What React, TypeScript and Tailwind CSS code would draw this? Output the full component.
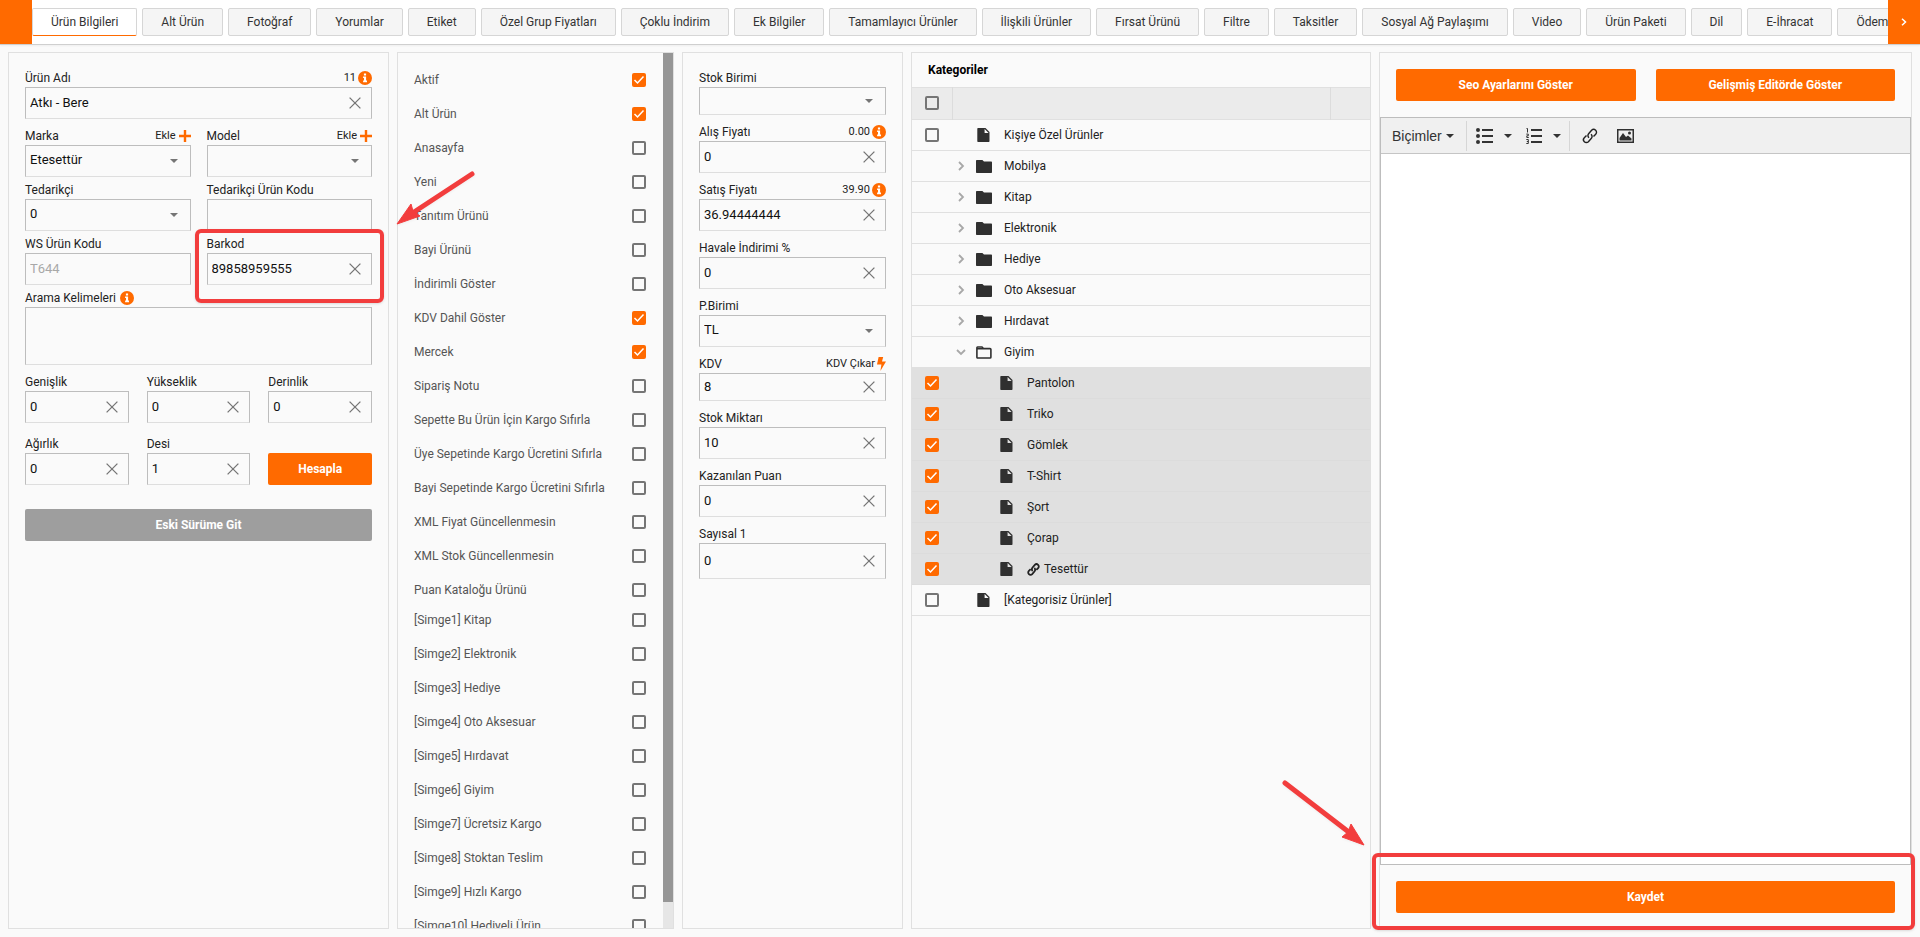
import { useState } from "react";
import type { ReactNode } from "react";
import clsx from "clsx";

const tabs = [
  "Ürün Bilgileri", "Alt Ürün", "Fotoğraf", "Yorumlar", "Etiket", "Özel Grup Fiyatları", "Çoklu İndirim",
  "Ek Bilgiler", "Tamamlayıcı Ürünler", "İlişkili Ürünler", "Fırsat Ürünü", "Filtre", "Taksitler",
  "Sosyal Ağ Paylaşımı", "Video", "Ürün Paketi", "Dil", "E-İhracat", "Ödeme Seçenekleri",
];

const flags = [
  { label: "Aktif", on: true },
  { label: "Alt Ürün", on: true },
  { label: "Anasayfa" },
  { label: "Yeni" },
  { label: "Tanıtım Ürünü" },
  { label: "Bayi Ürünü" },
  { label: "İndirimli Göster" },
  { label: "KDV Dahil Göster", on: true },
  { label: "Mercek", on: true },
  { label: "Sipariş Notu" },
  { label: "Sepette Bu Ürün İçin Kargo Sıfırla" },
  { label: "Üye Sepetinde Kargo Ücretini Sıfırla" },
  { label: "Bayi Sepetinde Kargo Ücretini Sıfırla" },
  { label: "XML Fiyat Güncellenmesin" },
  { label: "XML Stok Güncellenmesin" },
  { label: "Puan Kataloğu Ürünü" },
];

const symbols = [
  "[Simge1] Kitap", "[Simge2] Elektronik", "[Simge3] Hediye", "[Simge4] Oto Aksesuar", "[Simge5] Hırdavat",
  "[Simge6] Giyim", "[Simge7] Ücretsiz Kargo", "[Simge8] Stoktan Teslim", "[Simge9] Hızlı Kargo",
  "[Simge10] Hediyeli Ürün",
];

type Category = { name: string; kind: "file" | "folder" | "open" | "child"; linked?: boolean };

const categories: Category[] = [
  { name: "Kişiye Özel Ürünler", kind: "file" },
  { name: "Mobilya", kind: "folder" },
  { name: "Kitap", kind: "folder" },
  { name: "Elektronik", kind: "folder" },
  { name: "Hediye", kind: "folder" },
  { name: "Oto Aksesuar", kind: "folder" },
  { name: "Hırdavat", kind: "folder" },
  { name: "Giyim", kind: "open" },
  { name: "Pantolon", kind: "child" },
  { name: "Triko", kind: "child" },
  { name: "Gömlek", kind: "child" },
  { name: "T-Shirt", kind: "child" },
  { name: "Şort", kind: "child" },
  { name: "Çorap", kind: "child" },
  { name: "Tesettür", kind: "child", linked: true },
  { name: "[Kategorisiz Ürünler]", kind: "file" },
];

function InfoIcon() {
  return (
    <svg width="14" height="14" viewBox="0 0 14 14" aria-hidden="true">
      <circle cx="7" cy="7" r="7" fill="#ff6a00" />
      <path d="M5.900 2.600h2.200v2H5.900zM5.100 5.500h3v4.100h.900V11.200H5.100V9.600h.900V7.100h-.900z" fill="#fff" />
    </svg>
  );
}

function PlusIcon() {
  return (
    <svg width="12" height="12" viewBox="0 0 12 12" aria-hidden="true">
      <path d="M6 0v12M0 6h12" stroke="#ff6a00" strokeWidth="2.4" />
    </svg>
  );
}

function BoltIcon() {
  return (
    <svg width="9" height="14" viewBox="0 0 9 14" aria-hidden="true">
      <path d="M1.6 0h4.6L5 4.4h4L3.4 14l1-6.4H0z" fill="#ff6a00" />
    </svg>
  );
}

function ClearIcon() {
  return (
    <svg width="12" height="12" viewBox="0 0 12 12" aria-hidden="true">
      <path d="M.6.6l10.8 10.8M11.4.6L.6 11.4" stroke="#757575" strokeWidth="1.3" />
    </svg>
  );
}

function Caret({ className }: { className?: string }) {
  return (
    <svg width="8" height="4" viewBox="0 0 8 4" className={className} fill="currentColor" aria-hidden="true">
      <path d="M0 0h8L4 4z" />
    </svg>
  );
}

function FileIcon() {
  return (
    <svg width="13" height="14" viewBox="0 0 13 14" aria-hidden="true">
      <path d="M1 0h7.500L12.500 4v9.300c0 .400-.300.700-.700.700H1c-.400 0-.700-.300-.700-.700V.700C.300.300.600 0 1 0zM7.600 1v4h4z" fill="#303030" fillRule="evenodd" />
    </svg>
  );
}

function FolderIcon({ open }: { open?: boolean }) {
  return (
    <svg width="16" height="13" viewBox="0 0 16 13" aria-hidden="true">
      {open ? (
        <path d="M1.5 1h4.500l1.500 1.500h6.500c.500 0 .900.300.900.800v8c0 .400-.400.700-.900.700H1.700c-.500 0-.800-.300-.800-.700V1.700C.900 1.300 1.100 1 1.500 1zM1 2.800h14" fill="none" stroke="#303030" strokeWidth="1.6" />
      ) : (
        <path d="M1 0h5.400L8 1.500h7c.600 0 1 .400 1 1V12c0 .600-.400 1-1 1H1c-.600 0-1-.400-1-1V1c0-.600.400-1 1-1z" fill="#303030" />
      )}
    </svg>
  );
}

function Chevron({ down }: { down?: boolean }) {
  return (
    <svg width="10" height="10" viewBox="0 0 10 10" fill="none" stroke="#a8a8a8" strokeWidth="1.8" aria-hidden="true">
      <path d={down ? "M1 3l4 4 4-4" : "M3 1l4 4-4 4"} />
    </svg>
  );
}

function LinkIcon({ size, stroke }: { size: number; stroke: number }) {
  return (
    <svg width={size} height={size} viewBox="0 0 16 16" fill="none" stroke="#222" strokeWidth={stroke} aria-hidden="true">
      <path d="M7 9.8a2.8 2.8 0 0 1-.4-4L9.6 2.3a2.8 2.8 0 0 1 4.1 4L11.5 8.6" />
      <path d="M9 6.2a2.8 2.8 0 0 1 .4 4L6.4 13.7a2.8 2.8 0 0 1-4.1-4L4.5 7.4" />
    </svg>
  );
}

function Check({ label, id, defaultChecked }: { label?: string; id?: string; defaultChecked?: boolean }) {
  return (
    <span className="relative block size-[14px] shrink-0">
      <input
        id={id}
        type="checkbox"
        aria-label={label}
        defaultChecked={defaultChecked}
        className="peer block size-[14px] appearance-none rounded-xs border-2 border-[#757575] checked:border-[#ff6a00] checked:bg-[#ff6a00]"
      />
      <svg viewBox="0 0 14 14" className="pointer-events-none absolute inset-0 hidden size-[14px] peer-checked:block" fill="none" stroke="#fff" strokeWidth="1.5" aria-hidden="true">
        <path d="M2.5 7l3 3 6-6.500" />
      </svg>
    </span>
  );
}

type FieldProps = {
  id: string;
  label: string;
  value?: string;
  type?: "text" | "select" | "plain";
  extra?: ReactNode;
  height?: string;
  disabled?: boolean;
};

const boxStyle = "w-full border border-[#bdbdbd] border-b-[#dedede] bg-transparent px-1 pb-[2px] text-[13px] text-[#111] outline-none";

function Field({ id, label, value = "", type = "text", extra, height = "h-8", disabled }: FieldProps) {
  return (
    <div className="min-w-0">
      <div className="flex h-[18px] items-center justify-between">
        <label htmlFor={id}>{label}</label>
        {extra}
      </div>
      <div className="relative">
        {type === "select" ? (
          <>
            <select id={id} defaultValue={value} className={clsx(boxStyle, height, "block appearance-none")}>
              <option value={value}>{value}</option>
            </select>
            <Caret className="pointer-events-none absolute top-1/2 right-[13px] -translate-y-1/2 text-[#757575]" />
          </>
        ) : (
          <input id={id} type="text" defaultValue={value} disabled={disabled} className={clsx(boxStyle, height, "block disabled:text-[#a8a8a8]")} />
        )}
        {type === "text" && !disabled && (
          <button type="button" aria-label={`${label} temizle`} className="absolute inset-y-0 right-[11px] flex items-center">
            <ClearIcon />
          </button>
        )}
      </div>
    </div>
  );
}

function Hint({ children }: { children: ReactNode }) {
  return (
    <span className="flex items-center gap-[2px] text-[11px]">
      {children}
      <InfoIcon />
    </span>
  );
}

function AddButton() {
  return (
    <button type="button" className="flex items-center gap-[3px] text-[11px]">
      Ekle
      <PlusIcon />
    </button>
  );
}

function Button({ children, gray }: { children: ReactNode; gray?: boolean }) {
  return (
    <button type="button" className={clsx("h-8 w-full rounded-xs text-xs font-bold text-white", gray ? "bg-[#9e9e9e]" : "bg-[#ff6a00]")}>
      {children}
    </button>
  );
}

function TabBar() {
  const [active, setActive] = useState(0);
  return (
    <nav className="flex h-[45px] shrink-0 border-b border-[#cfcfcf] bg-white shadow-xs">
      <button type="button" aria-label="Geri" className="h-11 w-8 shrink-0 bg-[#ff6a00]" />
      <div className="flex min-w-0 flex-1 gap-[5px] overflow-hidden pt-2">
        {tabs.map((tab, i) => (
          <button
            key={tab}
            type="button"
            onClick={() => setActive(i)}
            className={clsx(
              "h-7 shrink-0 rounded-xs border border-[#d6d6d6] px-[18px] whitespace-nowrap text-[#333]",
              i === active ? "border-b-[#ff6a00] bg-white" : "bg-[#f5f5f5]"
            )}
          >
            {tab}
          </button>
        ))}
      </div>
      <button type="button" aria-label="İleri" className="flex h-11 w-8 shrink-0 items-center justify-center bg-[#ff6a00]">
        <svg width="6" height="8" viewBox="0 0 6 8" fill="none" stroke="#fff" strokeWidth="1.5" aria-hidden="true">
          <path d="M1 .7L4.5 4 1 7.3" />
        </svg>
      </button>
    </nav>
  );
}

function GeneralPanel() {
  return (
    <section className="border border-[#e0e0e0] p-4">
      <Field id="name" label="Ürün Adı" value="Atkı - Bere" extra={<Hint>11</Hint>} />
      <div className="mt-2 grid grid-cols-2 gap-x-4 gap-y-1">
        <Field id="brand" label="Marka" value="Etesettür" type="select" extra={<AddButton />} />
        <Field id="model" label="Model" type="select" extra={<AddButton />} />
        <Field id="supplier" label="Tedarikçi" value="0" type="select" />
        <Field id="supplierCode" label="Tedarikçi Ürün Kodu" type="plain" />
        <Field id="wsCode" label="WS Ürün Kodu" value="T644" disabled />
        <div className="relative">
          <Field id="barcode" label="Barkod" value="89858959555" />
          <div className="pointer-events-none absolute -inset-x-3 -top-[6px] -bottom-[18px] rounded-md border-4 border-[#f23d3d] shadow-sm" />
          <svg width="80" height="56" viewBox="0 0 80 56" className="pointer-events-none absolute -top-[65px] left-full ml-6 drop-shadow-xs" aria-hidden="true">
            <path d="M76 4L15 44" stroke="#f23d3d" strokeWidth="5" strokeLinecap="round" />
            <path d="M1 54L15 34l2 7 7 5z" fill="#f23d3d" stroke="#f23d3d" strokeWidth="1" />
          </svg>
        </div>
      </div>
      <div className="mt-1">
        <div className="flex h-[18px] items-center gap-1">
          <label htmlFor="keywords">Arama Kelimeleri</label>
          <InfoIcon />
        </div>
        <textarea id="keywords" className={clsx(boxStyle, "block h-[58px] resize-none")} />
      </div>
      <div className="mt-2 grid grid-cols-3 items-end gap-x-[18px] gap-y-3">
        <Field id="width" label="Genişlik" value="0" />
        <Field id="height" label="Yükseklik" value="0" />
        <Field id="depth" label="Derinlik" value="0" />
        <Field id="weight" label="Ağırlık" value="0" />
        <Field id="desi" label="Desi" value="1" />
        <Button>Hesapla</Button>
      </div>
      <div className="mt-6">
        <Button gray>Eski Sürüme Git</Button>
      </div>
    </section>
  );
}

function FlagRow({ label, on }: { label: string; on?: boolean }) {
  const id = `flag-${label}`;
  return (
    <li className="flex h-[34px] items-center justify-between text-[#555]">
      <label htmlFor={id}>{label}</label>
      <Check id={id} defaultChecked={on} />
    </li>
  );
}

function FlagsPanel() {
  return (
    <section className="flex min-h-0 overflow-hidden border border-[#e0e0e0]">
      <div className="min-w-0 flex-1 overflow-hidden pt-[10px] pr-[17px] pl-4">
        <ul>
          {flags.map((flag) => (
            <FlagRow key={flag.label} label={flag.label} on={flag.on} />
          ))}
        </ul>
        <ul className="-mt-1">
          {symbols.map((symbol) => (
            <FlagRow key={symbol} label={symbol} />
          ))}
        </ul>
      </div>
      <div className="w-[10px] bg-[#e6e6e6]">
        <div className="h-[97%] bg-[#969696]" />
      </div>
    </section>
  );
}

function PricePanel() {
  return (
    <section className="flex flex-col gap-2 border border-[#e0e0e0] p-4">
      <Field id="unit" label="Stok Birimi" type="select" height="h-7" />
      <Field id="buyPrice" label="Alış Fiyatı" value="0" extra={<Hint>0.00</Hint>} />
      <Field id="sellPrice" label="Satış Fiyatı" value="36.94444444" extra={<Hint>39.90</Hint>} />
      <Field id="discount" label="Havale İndirimi %" value="0" />
      <Field id="currency" label="P.Birimi" value="TL" type="select" />
      <Field
        id="vat"
        label="KDV"
        value="8"
        height="h-7"
        extra={
          <button type="button" className="flex items-center gap-[2px] text-[11px]">
            KDV Çıkar
            <BoltIcon />
          </button>
        }
      />
      <Field id="stock" label="Stok Miktarı" value="10" />
      <Field id="points" label="Kazanılan Puan" value="0" />
      <Field id="numeric1" label="Sayısal 1" value="0" height="h-9" />
    </section>
  );
}

function CategoryRow({ category }: { category: Category }) {
  const { name, kind, linked } = category;
  const child = kind === "child";
  const folder = kind === "folder" || kind === "open";
  return (
    <tr className={clsx("h-[31px] border-b", child ? "border-[#dcdcdc] bg-[#e0e0e0]" : "border-[#e0e0e0]")}>
      <td className="pl-[13px]">{!folder && <Check label={name} defaultChecked={child} />}</td>
      <td colSpan={2}>
        <div className={clsx("flex items-center", child ? "pl-[27px]" : "pl-1")}>
          <span className="flex w-[18px] items-center">{folder && <Chevron down={kind === "open"} />}</span>
          <span className="flex w-[19px] justify-center">{folder ? <FolderIcon open={kind === "open"} /> : <FileIcon />}</span>
          <span className="ml-[11px] flex items-center gap-1">
            {linked && <LinkIcon size={13} stroke={2.2} />}
            {name}
          </span>
        </div>
      </td>
    </tr>
  );
}

function CategoryPanel() {
  return (
    <section className="border border-[#e0e0e0]">
      <h2 className="flex h-[34px] items-center px-4 font-bold text-black">Kategoriler</h2>
      <table className="w-full table-fixed border-collapse">
        <colgroup>
          <col className="w-10" />
          <col />
          <col className="w-10" />
        </colgroup>
        <thead>
          <tr className="h-8 border-y border-[#e0e0e0] bg-[#ebebeb]">
            <th className="border-r border-[#dcdcdc] pb-[2px] pl-[13px]"><Check label="Tümünü seç" /></th>
            <th className="border-r border-[#dcdcdc]" />
            <th />
          </tr>
        </thead>
        <tbody>
          {categories.map((category) => (
            <CategoryRow key={category.name} category={category} />
          ))}
        </tbody>
      </table>
    </section>
  );
}

function EditorToolbar() {
  return (
    <div className="flex h-9 items-center border-b border-[#c5c5c5] bg-[#f0f0f0] text-[#333]">
      <button type="button" className="flex h-[30px] items-center gap-1 border-r border-[#d6d6d6] pr-3 pl-[11px] font-['Liberation_Sans',Arial,sans-serif] text-sm">
        Biçimler
        <Caret />
      </button>
      <div className="flex h-[30px] items-center border-r border-[#d6d6d6] pr-2 pl-[9px]">
        <button type="button" aria-label="Madde işaretli liste" className="flex items-center gap-[11px]">
          <svg width="17" height="16" viewBox="0 0 17 16" fill="currentColor" aria-hidden="true">
            <circle cx="2" cy="2" r="2" /><circle cx="2" cy="8" r="2" /><circle cx="2" cy="14" r="2" />
            <path d="M6 1h11v2H6zM6 7h11v2H6zM6 13h11v2H6z" />
          </svg>
          <Caret />
        </button>
        <button type="button" aria-label="Numaralı liste" className="ml-[14px] flex items-center gap-[11px]">
          <svg width="16" height="16" viewBox="0 0 16 16" aria-hidden="true">
            <path d="M5 1h11v2H5zM5 7h11v2H5zM5 13h11v2H5z" fill="currentColor" />
            <path d="M.5.500h1v4M.3 6.100h2v1.700h-1.500v1.700h2M.3 11.500h2v4h-2M.8 13.500h1.500" fill="none" stroke="currentColor" strokeWidth="1" />
          </svg>
          <Caret />
        </button>
      </div>
      <button type="button" aria-label="Bağlantı ekle" className="ml-3">
        <LinkIcon size={16} stroke={1.4} />
      </button>
      <button type="button" aria-label="Resim ekle" className="ml-[19px]">
        <svg width="17" height="14" viewBox="0 0 17 14" aria-hidden="true">
          <path d="M.75.750h15.500v12.500H.750z" fill="none" stroke="#303030" strokeWidth="1.5" />
          <path d="M2.5 11.500V9L6 4l3 4 2-1.500 3.500 3v2z" fill="#303030" />
          <circle cx="12.5" cy="4" r="1.5" fill="#303030" />
        </svg>
      </button>
    </div>
  );
}

function EditorPanel() {
  return (
    <section className="flex flex-col border border-[#e0e0e0]">
      <div className="grid grid-cols-2 gap-5 p-4">
        <Button>Seo Ayarlarını Göster</Button>
        <Button>Gelişmiş Editörde Göster</Button>
      </div>
      <div className="flex flex-1 flex-col border border-[#bdbdbd]">
        <EditorToolbar />
        <textarea aria-label="Ürün açıklaması" className="w-full flex-1 resize-none bg-white outline-none" />
      </div>
      <div className="relative px-4 pt-4 pb-[15px]">
        <Button>Kaydet</Button>
        <div className="pointer-events-none absolute -top-3 -right-1 -bottom-[2px] -left-2 rounded-md border-4 border-[#f23d3d] shadow-sm" />
        <svg width="84" height="68" viewBox="0 0 84 68" className="pointer-events-none absolute -top-[86px] -left-[98px] drop-shadow-xs" aria-hidden="true">
          <path d="M3 4L68 54" stroke="#f23d3d" strokeWidth="5" strokeLinecap="round" />
          <path d="M82 66L60 58l6-5 3-8z" fill="#f23d3d" stroke="#f23d3d" strokeWidth="1" />
        </svg>
      </div>
    </section>
  );
}

export default function App() {
  return (
    <div className="flex h-screen min-h-[640px] flex-col bg-[#fafafa] font-['Roboto','Noto_Sans',sans-serif] text-xs text-[#222]">
      <TabBar />
      <main className="grid min-h-0 flex-1 grid-cols-[381fr_277fr_221fr_460fr_533fr] gap-2 px-2 pt-[7px] pb-2">
        <GeneralPanel />
        <FlagsPanel />
        <PricePanel />
        <CategoryPanel />
        <EditorPanel />
      </main>
    </div>
  );
}
